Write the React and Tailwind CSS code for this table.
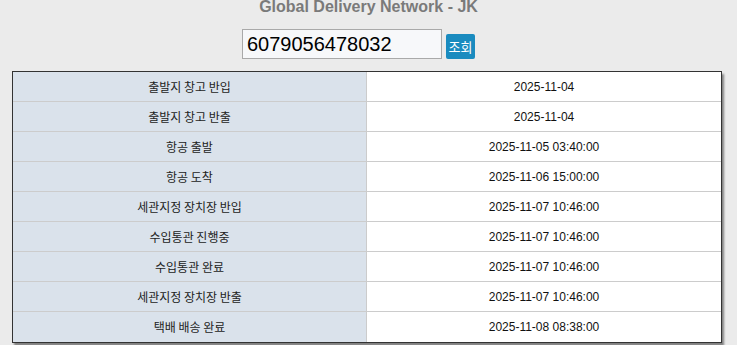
import React from "react";

const rows = [
  ["출발지 창고 반입", "2025-11-04"],
  ["출발지 창고 반출", "2025-11-04"],
  ["항공 출발", "2025-11-05 03:40:00"],
  ["항공 도착", "2025-11-06 15:00:00"],
  ["세관지정 장치장 반입", "2025-11-07 10:46:00"],
  ["수입통관 진행중", "2025-11-07 10:46:00"],
  ["수입통관 완료", "2025-11-07 10:46:00"],
  ["세관지정 장치장 반출", "2025-11-07 10:46:00"],
  ["택배 배송 완료", "2025-11-08 08:38:00"],
];

export default function App() {
  return (
    <div className="w-[737px] h-[345px] overflow-hidden bg-[#ebebeb] font-['Liberation_Sans','Noto_Sans_CJK_KR',sans-serif] text-black">
      {/* HEADER */}
      <h1 className="mt-[-3px] h-[20px] text-center text-[16px] leading-[20px] font-bold text-[#7a7a7a]">
        Global Delivery Network - JK
      </h1>

      {/* SEARCH */}
      <div className="mt-[12px] flex items-end pl-[242px] gap-[4px]">
        <input
          readOnly
          value="6079056478032"
          className="w-[200px] h-[30px] bg-[#f7f8fa] border border-[#a9a9a9] px-[4px] text-[20px] leading-[28px] outline-none"
        />
        <button className="w-[29px] h-[25px] rounded-[2px] bg-[#1a8bbf] text-white text-[13px] leading-[25px] font-['Noto_Sans_CJK_KR',sans-serif]">
          조회
        </button>
      </div>

      {/* TRACKING TABLE */}
      <div className="mt-[12px] ml-[12px] w-[710px] border border-[#333] bg-white shadow-[2px_3px_2px_rgba(0,0,0,0.45)]">
        {rows.map(([label, date], i) => (
          <div
            key={i}
            className={`flex h-[30px] ${i < rows.length - 1 ? "border-b border-[#cccccc]" : ""}`}
          >
            <div className="w-[354px] shrink-0 flex items-center justify-center bg-[#dae2eb] border-r border-[#cccccc] text-[12px] text-[#222] font-['Noto_Sans_CJK_KR',sans-serif]">
              {label}
            </div>
            <div className="flex-1 flex items-center justify-center text-[12px] text-[#111]">
              {date}
            </div>
          </div>
        ))}
      </div>
    </div>
  );
}
